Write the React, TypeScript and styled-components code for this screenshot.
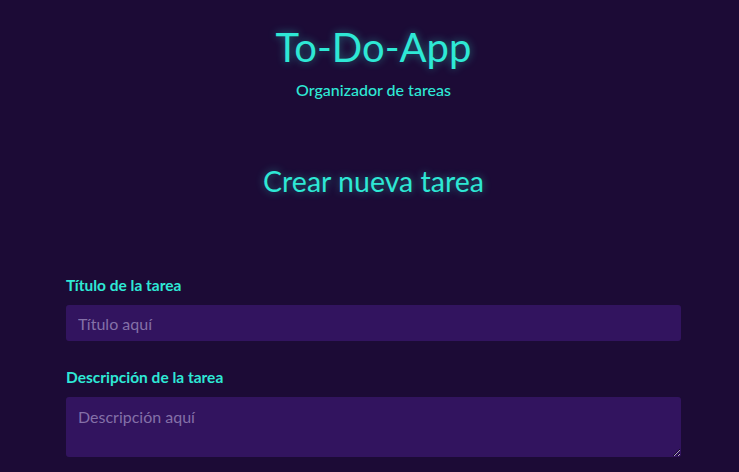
import React from "react";
import styled, { createGlobalStyle } from "styled-components";

const Global = createGlobalStyle`
  html, body {
    margin: 0;
    padding: 0;
    background: #1c0b36;
  }
  body {
    font-family: Lato, "Open Sans", sans-serif;
  }
  * { box-sizing: border-box; }
`;

const Page = styled.div`
  min-height: 472px;
  padding-left: 8px;
  background: #1c0b36;
  color: #2ee8d5;
`;

const Header = styled.header`
  display: flex;
  flex-direction: column;
  align-items: center;
  padding-top: 23px;
`;

const Title = styled.h1`
  margin: 0;
  font-size: 40px;
  font-weight: 400;
  line-height: 48px;
  color: #2ee8d5;
  text-shadow: 0 0 8px rgba(46, 232, 213, 0.45);
`;

const Subtitle = styled.p`
  margin: 9px 0 0;
  font-size: 16px;
  font-weight: 500;
  line-height: 20px;
  color: #2ee8d5;
`;

const SectionTitle = styled.h2`
  margin: 63px 0 0;
  text-align: center;
  font-size: 28.5px;
  font-weight: 400;
  line-height: 36px;
  color: #2ee8d5;
  text-shadow: 0 0 8px rgba(46, 232, 213, 0.45);
`;

const Form = styled.form`
  display: flex;
  flex-direction: column;
  gap: 27px;
  padding: 77px 58px 0;
`;

const Field = styled.div`
  display: flex;
  flex-direction: column;
  gap: 11px;
`;

const Label = styled.label`
  font-size: 15.5px;
  font-weight: 700;
  line-height: 18px;
  color: #2ee8d5;
`;

const inputBase = `
  width: 100%;
  border: none;
  outline: none;
  border-radius: 3px;
  background: #32145f;
  color: #e5dcf5;
  font-family: Lato, "Open Sans", sans-serif;
  font-size: 16px;
  padding: 0 12px;
  &::placeholder { color: #8470a8; }
`;

const Input = styled.input`
  ${inputBase}
  height: 36px;
`;

const TextArea = styled.textarea`
  ${inputBase}
  height: 60px;
  padding-top: 10px;
  resize: vertical;
  display: block;
`;

export default function App() {
  return (
    <>
      <Global />
      <Page>
        <Header>
          <Title>To-Do-App</Title>
          <Subtitle>Organizador de tareas</Subtitle>
        </Header>
        <SectionTitle>Crear nueva tarea</SectionTitle>
        <Form>
          <Field>
            <Label>Título de la tarea</Label>
            <Input placeholder="Título aquí" />
          </Field>
          <Field>
            <Label>Descripción de la tarea</Label>
            <TextArea placeholder="Descripción aquí" />
          </Field>
        </Form>
      </Page>
    </>
  );
}
